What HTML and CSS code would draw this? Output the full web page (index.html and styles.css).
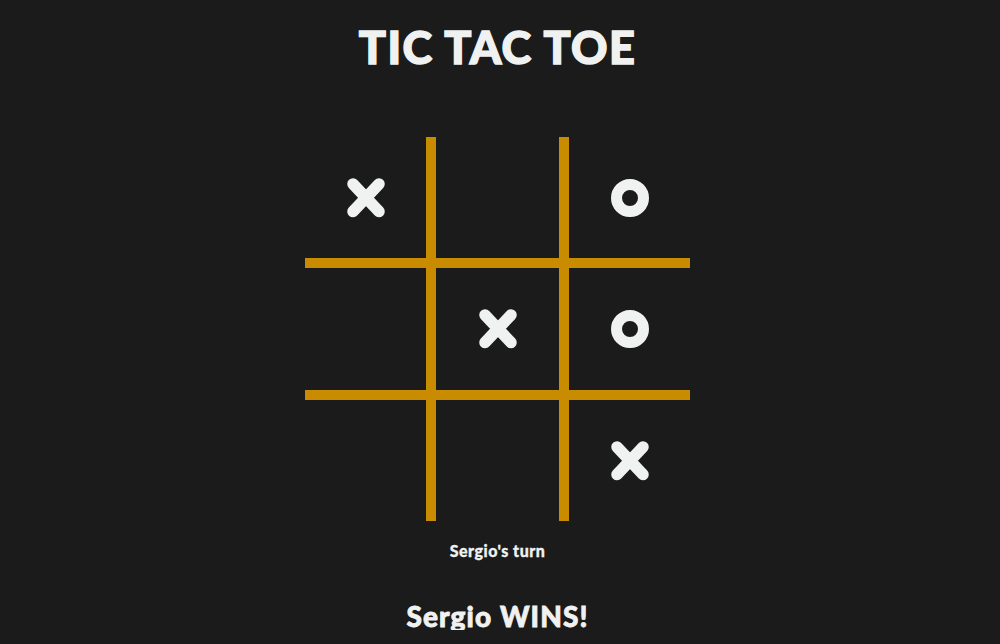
FILE: index.html
```html
<!DOCTYPE html>
<html lang="en">
<head>
<meta charset="utf-8">
<title>Tic Tac Toe</title>
<link rel="stylesheet" href="styles.css">
</head>
<body>
<main class="game">
  <h1 class="title">TIC TAC TOE</h1>
  <div class="board">
    <div class="cell"><svg class="mark" viewBox="0 0 38 40"><path d="M6 6 L32 33.5 M32 6 L6 33.5"/></svg></div>
    <div class="cell"></div>
    <div class="cell"><svg class="mark" viewBox="0 0 38 40"><circle cx="19" cy="20" r="13.5"/></svg></div>
    <div class="cell"></div>
    <div class="cell"><svg class="mark" viewBox="0 0 38 40"><path d="M6 6 L32 33.5 M32 6 L6 33.5"/></svg></div>
    <div class="cell"><svg class="mark" viewBox="0 0 38 40"><circle cx="19" cy="20" r="13.5"/></svg></div>
    <div class="cell"></div>
    <div class="cell"></div>
    <div class="cell"><svg class="mark" viewBox="0 0 38 40"><path d="M6 6 L32 33.5 M32 6 L6 33.5"/></svg></div>
  </div>
  <p class="turn">Sergio's turn</p>
  <p class="winner">Sergio WINS!</p>
</main>
</body>
</html>
```
FILE: styles.css
```css
html, body {
  margin: 0;
  padding: 0;
  background: #1b1b1b;
}
body {
  font-family: Lato, "Open Sans", "DejaVu Sans", sans-serif;
  color: #f0f2f2;
}
.game {
  display: flex;
  flex-direction: column;
  align-items: center;
  padding-right: 5px;
}
.title {
  margin: 25px 0 0;
  font-size: 45px;
  line-height: 1;
  font-weight: 900;
  letter-spacing: 1.4px;
  -webkit-text-stroke: 1.4px #f0f2f2;
}
.board {
  margin-top: 67px;
  display: grid;
  grid-template-columns: 121px 123px 121px;
  grid-template-rows: 121px 122px 121px;
  gap: 10px;
  background: #c98b00;
}
.cell {
  background: #1b1b1b;
  display: flex;
  align-items: center;
  justify-content: center;
}
.mark {
  width: 38px;
  height: 40px;
  fill: none;
  stroke: #f0f2f2;
}
.mark path {
  stroke-width: 11.5;
  stroke-linecap: round;
}
.mark circle {
  stroke-width: 11;
}
.turn {
  margin: 22px 0 0;
  font-size: 16px;
  line-height: 1;
  font-weight: 900;
  letter-spacing: 0.5px;
  -webkit-text-stroke: 0.3px #f0f2f2;
}
.winner {
  margin: 43px 0 0;
  font-size: 28px;
  line-height: 1;
  font-weight: 900;
  letter-spacing: 1.1px;
  -webkit-text-stroke: 0.8px #f0f2f2;
}
```
